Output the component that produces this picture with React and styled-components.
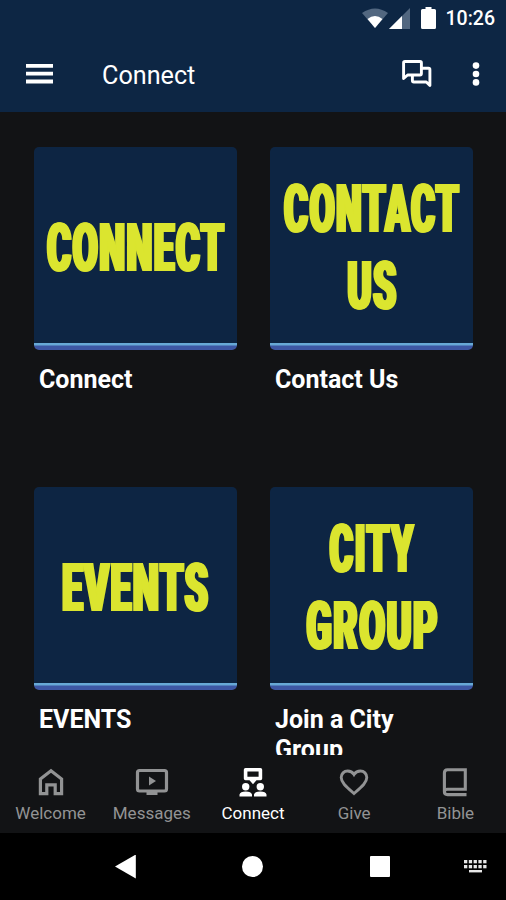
import React from 'react';
import styled, { createGlobalStyle } from 'styled-components';

const tiles = [
  { label: 'Connect', words: [{ text: 'CONNECT', scale: 0.544 }] },
  {
    label: 'Contact Us',
    words: [
      { text: 'CONTACT', scale: 0.541 },
      { text: 'US', scale: 0.545 },
    ],
  },
  { label: 'EVENTS', words: [{ text: 'EVENTS', scale: 0.552 }] },
  {
    label: 'Join a City Group',
    words: [
      { text: 'CITY', scale: 0.533 },
      { text: 'GROUP', scale: 0.556 },
    ],
  },
];

const WifiIcon = () => (
  <svg width="26" height="20" viewBox="0 0 26 20">
    <path d="M0 5Q13-4 26 5L13 20Z" fill="#526780" />
    <path d="M5.500 11Q13 5 20.500 11L13 20Z" fill="#fff" />
  </svg>
);

const SignalIcon = () => (
  <svg width="21" height="21" viewBox="0 0 21 21">
    <path d="M0 21L21 0V21Z" fill="#526780" />
    <path d="M0 21L13 8V21Z" fill="#fff" />
  </svg>
);

const BatteryIcon = () => (
  <svg width="15" height="22" viewBox="0 0 15 22">
    <path
      d="M4.500 0H10.500V2H13.500Q15 2 15 3.500V20.500Q15 22 13.500 22H1.500Q0 22 0 20.500V3.500Q0 2 1.500 2H4.500Z"
      fill="#fff"
    />
  </svg>
);

const MenuIcon = () => (
  <svg width="27" height="20" viewBox="0 0 27 20" fill="#fff">
    <path d="M0 0H27V3.800H0ZM0 7.800H27V11.600H0ZM0 15.600H27V19.400H0Z" />
  </svg>
);

const ChatIcon = () => (
  <svg
    width="30"
    height="28"
    viewBox="0 0 30 28"
    fill="none"
    stroke="#fff"
    strokeWidth="2.900"
    strokeLinejoin="round"
  >
    <path d="M1.600 18.500V2.900Q1.600 1.500 3 1.500H18Q19.400 1.500 19.400 2.900V13.600Q19.400 15 18 15H5.600Z" />
    <path d="M19.400 8.300H26.500Q27.900 8.300 27.900 9.700V25.500L24.300 22H11.800Q10.400 22 10.400 20.600V15" />
  </svg>
);

const MoreIcon = () => (
  <svg width="8" height="24" viewBox="0 0 8 24" fill="#fff">
    <circle cx="4" cy="3.600" r="3.300" />
    <circle cx="4" cy="12" r="3.300" />
    <circle cx="4" cy="20.400" r="3.300" />
  </svg>
);

const HomeIcon = () => (
  <svg
    width="34"
    height="32"
    viewBox="0 0 34 32"
    fill="none"
    stroke="currentColor"
    strokeWidth="3.200"
  >
    <path d="M6.400 13L17 4.800L27.600 13V27.600H21.200V18.800H12.800V27.600H6.400Z" />
  </svg>
);

const VideoIcon = () => (
  <svg
    width="34"
    height="32"
    viewBox="0 0 34 32"
    fill="none"
    stroke="currentColor"
    strokeWidth="3.200"
  >
    <rect x="2.500" y="4.500" width="29" height="20.500" rx="2" />
    <path d="M14 10.500L21 15L14 19.500Z" fill="currentColor" stroke="none" />
    <path d="M11.500 26H22.500V29H11.500Z" fill="currentColor" stroke="none" />
  </svg>
);

const PeopleIcon = () => (
  <svg width="34" height="32" viewBox="0 0 34 32" fill="currentColor">
    <path
      fillRule="evenodd"
      d="M9.500 2H24.500Q26.200 2 26.200 3.700V12.500Q26.200 14.200 24.500 14.200H20.500L17 18.200L13.500 14.200H9.500Q7.800 14.200 7.800 12.500V3.700Q7.800 2 9.500 2ZM11.400 5.400V10.800H22.600V5.400Z"
    />
    <circle cx="9.700" cy="20.800" r="3.700" />
    <circle cx="24.300" cy="20.800" r="3.700" />
    <path d="M3.500 30.500V28.500Q4.200 25.500 9.700 25.500T16 28.500V30.500ZM18 30.500V28.500Q18.700 25.500 24.300 25.500T30.500 28.500V30.500Z" />
  </svg>
);

const HeartIcon = () => (
  <svg
    width="34"
    height="32"
    viewBox="0 0 34 32"
    fill="none"
    stroke="currentColor"
    strokeWidth="2.900"
  >
    <path d="M17 27.500C9 20.500 4.200 16.500 4.200 11.500C4.200 7.800 7 5 10.600 5C13.200 5 15.600 6.300 17 8.500C18.400 6.300 20.800 5 23.400 5C27 5 29.800 7.800 29.800 11.500C29.800 16.500 25 20.500 17 27.500Z" />
  </svg>
);

const BookIcon = () => (
  <svg
    width="34"
    height="32"
    viewBox="0 0 34 32"
    fill="none"
    stroke="currentColor"
    strokeWidth="3.100"
  >
    <path d="M28.500 28.600H9.500Q6.400 28.600 6.400 25.800V7Q6.400 3.800 9.500 3.800H27.300V23.300H9.500Q6.400 23.300 6.400 26" />
  </svg>
);

const KeyboardIcon = () => (
  <svg width="23" height="13" viewBox="0 0 23 13" fill="#e8e8e8">
    {[0, 1, 2, 3, 4].map((i) => (
      <React.Fragment key={i}>
        <rect x={i * 4.8} y="0" width="3.300" height="3.300" />
        <rect x={i * 4.8} y="5" width="3.300" height="3.300" />
      </React.Fragment>
    ))}
    <rect x="5" y="10" width="13" height="2.400" />
  </svg>
);

const tabs = [
  { name: 'Welcome', Icon: HomeIcon },
  { name: 'Messages', Icon: VideoIcon },
  { name: 'Connect', Icon: PeopleIcon, active: true },
  { name: 'Give', Icon: HeartIcon },
  { name: 'Bible', Icon: BookIcon },
];

export default function App() {
  return (
    <Screen>
      <GlobalStyle />
      <Header>
        <StatusBar>
          <WifiIcon />
          <SignalIcon />
          <BatteryIcon />
          <Clock>10:26</Clock>
        </StatusBar>
        <Toolbar>
          <IconButton aria-label="Menu">
            <MenuIcon />
          </IconButton>
          <Title>Connect</Title>
          <Actions>
            <IconButton aria-label="Chat">
              <ChatIcon />
            </IconButton>
            <IconButton aria-label="More">
              <MoreIcon />
            </IconButton>
          </Actions>
        </Toolbar>
      </Header>
      <Content>
        {tiles.map((tile) => (
          <Tile key={tile.label}>
            <Cover>
              {tile.words.map((word) => (
                <CoverWord key={word.text} $scale={word.scale}>
                  {word.text}
                </CoverWord>
              ))}
            </Cover>
            <TileLabel>{tile.label}</TileLabel>
          </Tile>
        ))}
      </Content>
      <TabBar>
        {tabs.map(({ name, Icon, active }) => (
          <Tab key={name} $active={active}>
            <Icon />
            <TabLabel>{name}</TabLabel>
          </Tab>
        ))}
      </TabBar>
      <SystemBar>
        <BackKey />
        <HomeKey />
        <RecentKey />
        <KeyboardKey>
          <KeyboardIcon />
        </KeyboardKey>
      </SystemBar>
    </Screen>
  );
}

const GlobalStyle = createGlobalStyle`
  * {
    box-sizing: border-box;
  }

  body {
    margin: 0;
    background: #121315;
    font-family: Roboto, "Liberation Sans", sans-serif;
  }
`;

const Screen = styled.div`
  width: 506px;
  height: 900px;
  display: flex;
  flex-direction: column;
  overflow: hidden;
  background: #121315;
  color: #fff;
`;

const Header = styled.header`
  height: 112px;
  flex-shrink: 0;
  background: #0d2644;
`;

const StatusBar = styled.div`
  height: 36px;
  padding: 0 11px 0 0;
  display: flex;
  align-items: center;
  justify-content: flex-end;

  svg:nth-child(2) {
    margin-left: 1px;
  }

  svg:nth-child(3) {
    margin-left: 11px;
  }
`;

const Clock = styled.span`
  margin: 2px 0 0 10px;
  font-size: 19.5px;
  font-weight: 500;
  line-height: 36px;
`;

const Toolbar = styled.div`
  height: 75px;
  padding: 0 26px;
  display: flex;
  align-items: center;
`;

const IconButton = styled.button`
  padding: 0;
  border: 0;
  display: flex;
  background: none;
`;

const Title = styled.h1`
  margin: 4px 0 0 49px;
  font-size: 25.2px;
  font-weight: 400;
  line-height: 30px;
`;

const Actions = styled.div`
  margin-left: auto;
  display: flex;
  align-items: center;
  gap: 40px;
`;

const Content = styled.main`
  height: 643px;
  flex-shrink: 0;
  padding: 35px 33px 0 34px;
  display: grid;
  grid-template-columns: 203px 203px;
  grid-auto-rows: 340px;
  justify-content: space-between;
  overflow: hidden;
`;

const Tile = styled.article`
  display: flex;
  flex-direction: column;
`;

const Cover = styled.div`
  height: 203px;
  border-radius: 5px;
  padding-bottom: 1px;
  display: flex;
  flex-direction: column;
  align-items: center;
  justify-content: center;
  overflow: hidden;
  background: linear-gradient(
    #0d2543 0 196px,
    #67a9d6 196px 198px,
    #3d57a4 199px 203px
  );
`;

/* The heading face is squeezed sideways and thickened into poster lettering. */
const CoverWord = styled.span`
  padding-left: 3px;
  color: #dbe52f;
  font-size: 67px;
  font-weight: 900;
  letter-spacing: 3px;
  line-height: 77px;
  white-space: nowrap;
  transform: scaleX(${(props) => props.$scale});
  text-shadow:
    1.5px 0 #dbe52f,
    -1.5px 0 #dbe52f,
    3px 0 #dbe52f,
    -3px 0 #dbe52f;
`;

const TileLabel = styled.h2`
  margin: 15px 30px 0 5px;
  font-size: 25px;
  font-weight: 700;
  line-height: 30px;
`;

const TabBar = styled.nav`
  height: 78px;
  flex-shrink: 0;
  display: grid;
  grid-template-columns: repeat(5, 1fr);
`;

const Tab = styled.a`
  padding-top: 11px;
  display: flex;
  flex-direction: column;
  align-items: center;
  color: ${(props) => (props.$active ? '#fff' : '#929394')};
`;

const TabLabel = styled.span`
  margin-top: 5px;
  font-size: 17px;
  line-height: 20px;
`;

const SystemBar = styled.footer`
  height: 67px;
  padding: 0 19px 0 115px;
  display: flex;
  align-items: center;
  gap: 106.5px;
  background: #000;
`;

const BackKey = styled.span`
  width: 21px;
  height: 24px;
  background: #fff;
  clip-path: polygon(0 50%, 100% 0, 100% 100%);
`;

const HomeKey = styled.span`
  width: 21px;
  height: 21px;
  border-radius: 50%;
  background: #fff;
`;

const RecentKey = styled.span`
  width: 21px;
  height: 21px;
  border-radius: 1px;
  background: #fff;
`;

const KeyboardKey = styled.span`
  display: flex;
  margin-left: -33px;
`;
